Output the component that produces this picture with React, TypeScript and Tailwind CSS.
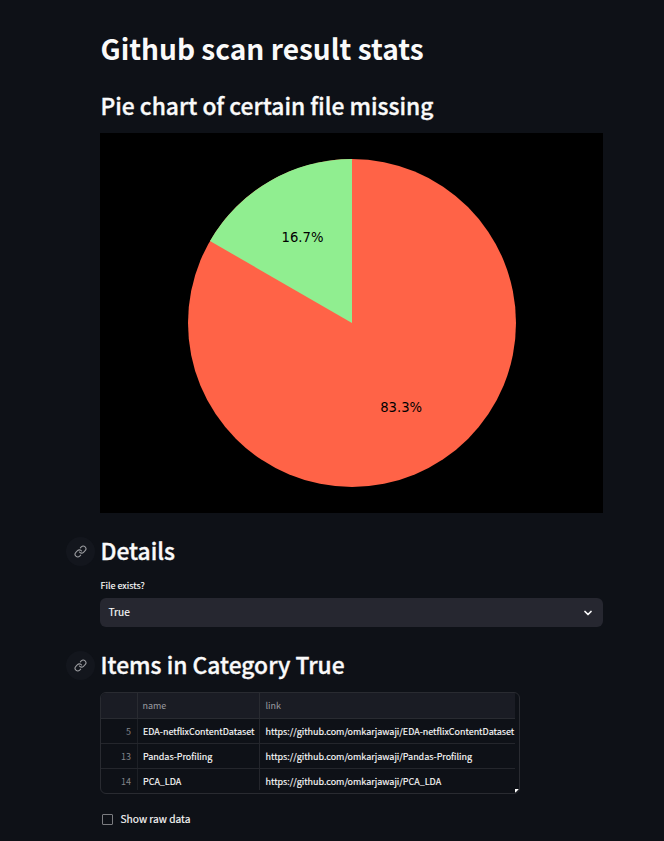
import { ChevronDown, Link } from "lucide-react";

const rows = [
  { id: 5, name: "EDA-netflixContentDataset" },
  { id: 13, name: "Pandas-Profiling" },
  { id: 14, name: "PCA_LDA" },
];

function Heading({ children }: { children: string }) {
  return (
    <div className="-ml-[34px] flex h-[29px] items-center">
      <span className="flex size-[29px] shrink-0 items-center justify-center rounded-full bg-[#13161d]">
        <Link className="size-[13px] text-[#9c9da1]" strokeWidth={2} />
      </span>
      <h2 className="-mt-[2px] ml-[5.5px] text-[22.8px] leading-[29px] font-medium whitespace-nowrap [-webkit-text-stroke:0.35px]">{children}</h2>
    </div>
  );
}

function PieChart() {
  return (
    <svg viewBox="0 0 503 380" className="mt-[13px] block h-[380px] w-[503px] bg-black">
      <circle cx="252" cy="190" r="164" fill="#ff6347" />
      <path d="M252 190V26A164 164 0 0 0 110 108Z" fill="#90ee90" />
      <g className="font-['DejaVu_Sans',sans-serif] text-[13.2px]" textAnchor="middle">
        <text x="202.5" y="108.5">16.7%</text>
        <text x="301.2" y="278.8">83.3%</text>
      </g>
    </svg>
  );
}

export default function App() {
  return (
    <main className="h-[841px] w-[664px] overflow-hidden bg-[#0e1117] pt-[29px] pl-[100px] font-['Noto_Sans_CJK_SC',sans-serif] text-[#fafafa]">
      <h1 className="ml-[0.5px] h-[38px] text-[28.1px] leading-[38px] font-bold whitespace-nowrap">Github scan result stats</h1>
      <h2 className="mt-[24px] ml-[0.5px] h-[29px] text-[22.8px] leading-[29px] font-medium whitespace-nowrap [-webkit-text-stroke:0.35px]">Pie chart of certain file missing</h2>
      <PieChart />
      <div className="h-[24px]" />
      <Heading>Details</Heading>
      <p className="mt-[12px] ml-[0.5px] h-[16px] text-[8.95px] leading-[16px] [-webkit-text-stroke:0.15px]">File exists?</p>
      <div className="mt-[4px] flex h-[29px] w-[503px] items-center justify-between rounded-[6px] bg-[#262730] pr-[9px] pl-[8.5px] text-[10.2px] leading-[28px]">
        <span className="-mt-px [-webkit-text-stroke:0.15px]">True</span>
        <ChevronDown className="size-[12px]" strokeWidth={3.5} />
      </div>
      <div className="h-[24px]" />
      <Heading>Items in Category True</Heading>
      <div className="relative mt-[12px] h-[102px] w-[420px] overflow-hidden rounded-[6px] border border-[#292b31] text-[8.97px]">
        <div className="w-[414px]">
          <div className="flex h-[26px] border-b border-[#292b31] bg-[#1a1c24] leading-[26px] text-[#9b9ca2]">
            <span className="w-[37px] border-r border-[#292b31]" />
            <span className="w-[122px] border-r border-[#292b31] pl-[4.5px]">name</span>
            <span className="pl-[5.5px]">link</span>
          </div>
          {rows.map((row) => (
            <div key={row.id} className="flex h-[25px] border-b border-[#24262c] leading-[25px] whitespace-nowrap last:h-[21px] last:border-0">
              <span className="w-[37px] shrink-0 border-r border-[#1d2026] pr-[6px] text-right text-[#83858b]">{row.id}</span>
              <span className="w-[122px] shrink-0 border-r border-[#24262c] pl-[5px] [-webkit-text-stroke:0.15px]">{row.name}</span>
              <span className="pl-[5.5px] [-webkit-text-stroke:0.15px]">https://github.com/omkarjawaji/{row.name}</span>
            </div>
          ))}
        </div>
        <svg viewBox="0 0 4 4" className="absolute right-0 bottom-0 size-[4px]"><path d="M0 0H4L0 4Z" fill="white" /></svg>
      </div>
      <label className="mt-[17px] ml-[2px] flex h-[16px] items-center">
        <span className="size-[11px] rounded-[1px] border border-[#7b7c80]" />
        <span className="ml-[7.5px] text-[10.2px] leading-[16px] [-webkit-text-stroke:0.15px]">Show raw data</span>
      </label>
    </main>
  );
}
